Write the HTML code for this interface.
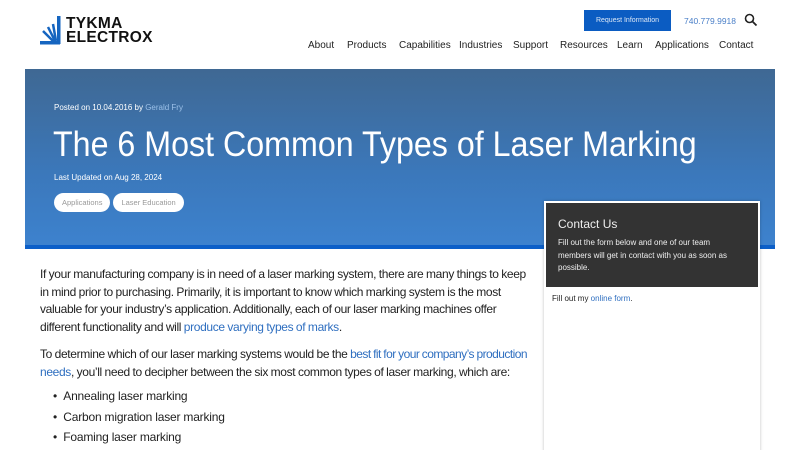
<!DOCTYPE html>
<html><head><style>
*{margin:0;padding:0;box-sizing:border-box}
html,body{width:800px;height:450px;overflow:hidden}
body{background:#fff;font-family:"Liberation Sans",sans-serif;position:relative;color:#222}
.a{position:absolute}
.hero{left:25px;top:69px;width:750px;height:180px;background:linear-gradient(180deg,#3f6893 0%,#3b78bb 60%,#3d82ce 100%);border-bottom:4px solid #0c5fc8}
.tag{display:inline-block;border-radius:10px;background:#fff;color:#999;font-size:7.5px;padding:5px 8px;margin-right:3px}
p.b{font-size:12px;line-height:17.7px;color:#222;letter-spacing:-0.35px;word-spacing:-0.3px;white-space:nowrap}
a{color:#2f6fc0;text-decoration:none}
</style></head><body>
<svg class="a" style="left:40px;top:15px" width="24" height="32" viewBox="0 0 24 32">
<rect x="17" y="1" width="3.5" height="28" fill="#1565c0"/>
<rect x="0" y="26" width="20" height="3.5" fill="#1565c0"/>
<path d="M15 28 L3 16 M15.5 27 L8 12 M16 26 L13 9" stroke="#1565c0" stroke-width="2.5"/>
</svg>
<div class="a" style="left:66px;top:17px;font-weight:bold;font-size:15.5px;line-height:14px;color:#111;letter-spacing:0.3px">TYKMA<br>ELECTROX</div>
<div class="a" style="left:584px;top:10px;width:87px;height:21px;background:#0b5cc2;color:#dce8f7;font-size:7px;text-align:center;line-height:21px">Request Information</div>
<div class="a" style="left:684px;top:16px;font-size:8.5px;color:#4a7fc8">740.779.9918</div>
<svg class="a" style="left:744px;top:13px" width="14" height="14" viewBox="0 0 14 14"><circle cx="5.5" cy="5.5" r="4" stroke="#222" stroke-width="1.6" fill="none"/><path d="M8.5 8.5L12.5 12.5" stroke="#222" stroke-width="1.8"/></svg>
<div class="a" style="top:40px;font-size:10px;color:#222;left:0;width:800px">
<span class="a" style="left:308px">About</span><span class="a" style="left:347px">Products</span><span class="a" style="left:399px">Capabilities</span><span class="a" style="left:459px">Industries</span><span class="a" style="left:513px">Support</span><span class="a" style="left:560px">Resources</span><span class="a" style="left:617px">Learn</span><span class="a" style="left:655px">Applications</span><span class="a" style="left:719px">Contact</span></div>
<div class="a hero"></div>
<div class="a" style="left:54px;top:103px;font-size:8px;color:#fff">Posted on 10.04.2016 by <span style="color:#9cc0e8">Gerald Fry</span></div>
<div class="a" style="left:53px;top:125px;font-size:35px;color:#fff;white-space:nowrap;transform:scaleX(0.92);transform-origin:left top">The 6 Most Common Types of Laser Marking</div>
<div class="a" style="left:54px;top:173px;font-size:8px;color:#fff">Last Updated on Aug 28, 2024</div>
<div class="a" style="left:54px;top:192px"><span class="tag">Applications</span><span class="tag">Laser Education</span></div>
<div class="a" style="left:544px;top:201px;width:216px;height:260px;border:2px solid #fff;background:#fff;box-shadow:0 0 3px rgba(0,0,0,.25)">
<div style="background:#333;height:84px;padding:14px 12px;color:#eee">
<div style="font-size:12px;margin-bottom:6px">Contact Us</div>
<div style="font-size:8px;line-height:12.5px;width:175px">Fill out the form below and one of our team members will get in contact with you as soon as possible.</div></div>
<div style="font-size:8px;padding:7px 6px;color:#222">Fill out my <a>online form</a>.</div></div>
<div class="a" style="left:40px;top:266px;width:490px">
<p class="b">If your manufacturing company is in need of a laser marking system, there are many things to keep<br>in mind prior to purchasing. Primarily, it is important to know which marking system is the most<br>valuable for your industry’s application. Additionally, each of our laser marking machines offer<br>different functionality and will <a>produce varying types of marks</a>.</p>
<p class="b" style="margin-top:9px">To determine which of our laser marking systems would be the <a style="letter-spacing:-0.55px">best fit for your company’s production</a><br><a>needs</a>, you’ll need to decipher between the six most common types of laser marking, which are:</p>
<div style="font-size:12px;line-height:20.5px;margin-top:5px;padding-left:13px;letter-spacing:-0.2px">• &nbsp;Annealing laser marking<br>• &nbsp;Carbon migration laser marking<br>• &nbsp;Foaming laser marking</div>
</div>
</body></html>
